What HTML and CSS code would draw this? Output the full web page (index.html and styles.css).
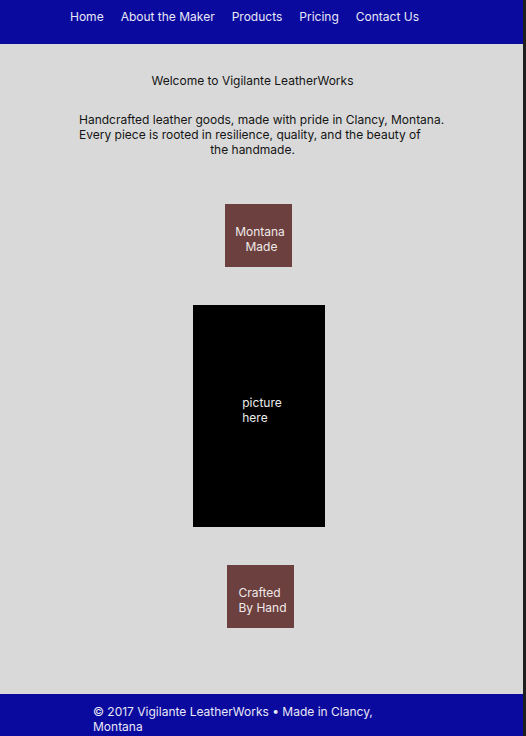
FILE: index.html
```html
<!DOCTYPE html>
<html>
<head>
<meta charset="utf-8">
<link rel="stylesheet" href="styles.css">
</head>
<body>
<div class="page">
  <header class="header">
    <nav class="nav">
      <a href="#">Home</a>
      <a href="#">About the Maker</a>
      <a href="#">Products</a>
      <a href="#">Pricing</a>
      <a href="#">Contact Us</a>
    </nav>
  </header>
  <main class="main">
    <h1 class="title">Welcome to Vigilante LeatherWorks</h1>
    <p class="intro">
      <span class="line">Handcrafted leather goods, made with pride in Clancy, Montana.</span>
      <span class="line">Every piece is rooted in resilience, quality, and the beauty of</span>
      <span class="line last">the handmade.</span>
    </p>
    <div class="tile tile-one"><span>Montana<br><span class="made">Made</span></span></div>
    <div class="picture"><span>picture<br>here</span></div>
    <div class="tile tile-two"><span>Crafted<br>By Hand</span></div>
  </main>
  <footer class="footer">
    <p class="copy">© 2017 Vigilante LeatherWorks • Made in Clancy, Montana</p>
  </footer>
</div>
</body>
</html>
```
FILE: styles.css
```css
html, body {
  margin: 0;
  padding: 0;
}
body {
  background: #1e1e1e;
  font-family: Inter, "Noto Sans", sans-serif;
  font-size: 12px;
  line-height: 15px;
  height: 736px;
  overflow: hidden;
}
.page {
  width: 523px;
  height: 736px;
  background: #d9d9d9;
  display: flex;
  flex-direction: column;
}
.header {
  background: #0b0a9f;
  height: 44px;
  flex: none;
}
.nav {
  display: flex;
  gap: 17px;
  padding: 9px 0 0 70px;
}
.nav a {
  color: #e8e8f6;
  text-decoration: none;
}
.main {
  flex: 1;
  display: flex;
  flex-direction: column;
  color: #141414;
}
.title {
  font-size: 12px;
  font-weight: 400;
  line-height: 15px;
  margin: 29px 0 0 0;
  width: 505px;
  text-align: center;
}
.intro {
  margin: 24px 0 0 0;
  width: 505px;
}
.line {
  display: block;
  padding-left: 79px;
}
.line.last {
  padding-left: 0;
  text-align: center;
}
.tile {
  width: 67px;
  height: 63px;
  background: #6b403e;
  color: #f1e9e9;
  display: flex;
  align-items: center;
  justify-content: center;
}
.tile > span {
  padding-top: 6px;
}
.tile-one > span {
  text-align: center;
  margin-left: 3px;
}
.made {
  padding-left: 3px;
}
.tile-one {
  margin: 47px 0 0 225px;
}
.tile-two {
  margin: 38px 0 0 227px;
}
.tile-two > span {
  margin-left: 4px;
}
.picture {
  width: 132px;
  height: 222px;
  background: #000;
  color: #ececec;
  margin: 38px 0 0 193px;
  display: flex;
  align-items: center;
  justify-content: center;
}
.picture span {
  margin-left: 6px;
  margin-top: -12px;
}
.footer {
  background: #0b0a9f;
  height: 42px;
  flex: none;
}
.copy {
  margin: 0;
  padding: 10px 0 0 93px;
  width: 290px;
  color: #e8e8f6;
}
```
